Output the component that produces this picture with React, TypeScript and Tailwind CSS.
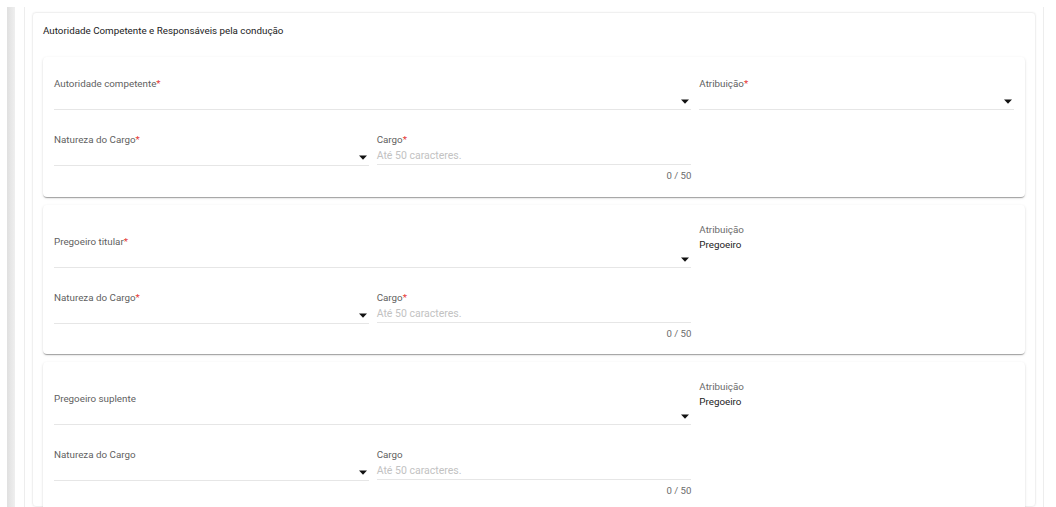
import React from "react";

const cardShadow =
  "bg-white rounded-[4px] shadow-[0_2px_1px_-1px_rgba(0,0,0,0.2),0_1px_1px_0_rgba(0,0,0,0.14),0_1px_3px_0_rgba(0,0,0,0.12)]";

function Req() {
  return <span className="text-[#e53935]">*</span>;
}

function Arrow() {
  return (
    <svg width="8" height="5" viewBox="0 0 8 5" className="shrink-0">
      <path d="M0 0.5 H8 L4 4.8 Z" fill="#111" />
    </svg>
  );
}

function SelectField({ label, required }: { label: string; required?: boolean }) {
  return (
    <div className="flex flex-col">
      <div className="h-[14px] leading-[14px] text-[9.8px] text-[#5f5f5f]">
        {label}
        {required && <Req />}
      </div>
      <div className="h-[19px] flex items-end justify-end pr-[2px] pb-[5px] border-b border-[#e6e6e6]">
        <Arrow />
      </div>
    </div>
  );
}

function TextField({ label, required }: { label: string; required?: boolean }) {
  return (
    <div className="flex flex-col">
      <div className="h-[14px] leading-[14px] text-[9.8px] text-[#5f5f5f]">
        {label}
        {required && <Req />}
      </div>
      <div className="h-[18px] flex items-center text-[10.5px] text-[#c2c2c2] border-b border-[#e6e6e6]">
        Até 50 caracteres.
      </div>
      <div className="h-[22px] flex items-center justify-end text-[9.6px] text-[#6b6b6b]">0 / 50</div>
    </div>
  );
}

function StaticField({ label, value }: { label: string; value: string }) {
  return (
    <div className="flex flex-col pb-[14px]">
      <div className="h-[14px] leading-[14px] text-[9.8px] text-[#6b6b6b]">{label}</div>
      <div className="h-[17px] flex items-center text-[9.8px] text-[#222]">{value}</div>
    </div>
  );
}

type Section = {
  person: string;
  required: boolean;
  fixed?: string;
};

const sections: Section[] = [
  { person: "Autoridade competente", required: true },
  { person: "Pregoeiro titular", required: true, fixed: "Pregoeiro" },
  { person: "Pregoeiro suplente", required: false, fixed: "Pregoeiro" },
];

function PersonCard({ s }: { s: Section }) {
  return (
    <div className={`${cardShadow} px-[11px] ${s.fixed ? "pt-[18px] pb-[9px]" : "pt-[20px] pb-[10px]"}`}>
      <div className="grid grid-cols-3 gap-x-[8px] items-end">
        <div className="col-span-2">
          <SelectField label={s.person} required={s.required} />
        </div>
        {s.fixed ? (
          <StaticField label="Atribuição" value={s.fixed} />
        ) : (
          <SelectField label="Atribuição" required />
        )}
      </div>
      <div className="grid grid-cols-3 gap-x-[8px] mt-[23px]">
        <SelectField label="Natureza do Cargo" required={s.required} />
        <TextField label="Cargo" required={s.required} />
        <div />
      </div>
    </div>
  );
}

export default function App() {
  return (
    <div className="h-[507px] overflow-hidden bg-white flex pt-[7px] font-['Roboto',sans-serif]">
      <div className="w-[7px] shrink-0" />
      <div className="w-[8px] shrink-0 bg-gradient-to-r from-[#e0e0e0] to-[#efefef]" />
      <div className="flex-1 ml-[9px] mr-[12px] border-x border-[#ededed] px-[7px] flex">
        <div className="flex-1 mt-[5px] rounded-[4px] border border-[#f0f0f0] shadow-[0_0_2px_rgba(0,0,0,0.06)] px-[10px]">
          <h2 className="h-[34px] pt-[11px] text-[9.8px] leading-[14px] text-[#222] font-normal">
            Autoridade Competente e Responsáveis pela condução
          </h2>
          <div className="flex flex-col gap-[8px] mt-[10px]">
            {sections.map((s) => (
              <PersonCard key={s.person} s={s} />
            ))}
          </div>
        </div>
      </div>
    </div>
  );
}
